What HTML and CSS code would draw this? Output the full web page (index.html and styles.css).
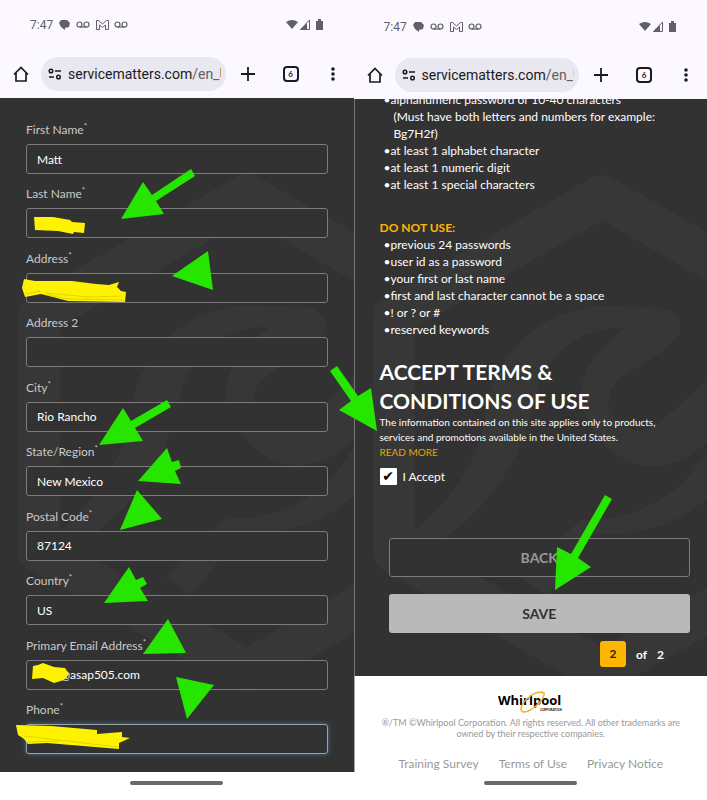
FILE: index.html
```html
<!DOCTYPE html>
<html lang="en">
<head>
  <meta charset="UTF-8">
  <meta name="viewport" content="width=device-width, initial-scale=1">
  <title>Service Matters Registration</title>
  <link rel="stylesheet" href="styles.css">
</head>
<body>

<!-- Shared icons -->
<svg class="symbols" aria-hidden="true">
  <symbol id="notifications" viewBox="0 0 70 12">
    <path d="M2 1h6l3 3-1 4-4 1v2L2 8 0 4z" fill="#625f66"/>
    <g fill="none" stroke="#625f66" stroke-width="1.2">
      <circle cx="20.500" cy="5.500" r="2.500"/><circle cx="27.500" cy="5.500" r="2.500"/><path d="M20.500 8h7"/>
      <circle cx="58.500" cy="5.500" r="2.500"/><circle cx="65.500" cy="5.500" r="2.500"/><path d="M58.500 8h7"/>
    </g>
    <path d="M37.500 10.500V1.500h2L43.500 5l4-3.500h2v9h-3V6L43.500 8.500 40.500 6v4.500z" fill="none" stroke="#625f66"/>
  </symbol>
  <symbol id="signal" viewBox="0 0 38 12">
    <path d="M0 3Q6-1 12 3L6 10z" fill="#625f66"/>
    <path d="M14.500 10.500h9V1z" fill="none" stroke="#625f66"/>
    <path d="M14 11h7V4z" fill="#625f66"/>
    <path d="M30 2h2V0h3v2h2v9h-7z" fill="#625f66"/>
  </symbol>
  <symbol id="home" viewBox="0 0 16 16">
    <path d="M3 7v8h10V7M1 8.500l7-7 7 7" fill="none" stroke="#1b1a20" stroke-width="1.700"/>
  </symbol>
  <symbol id="tune" viewBox="0 0 14 12">
    <g fill="none" stroke="#1b1a20" stroke-width="1.500">
      <circle cx="3" cy="3" r="1.800"/><path d="M7 3h6M1 9h5"/><circle cx="10.500" cy="9" r="1.800"/>
    </g>
  </symbol>
  <symbol id="plus" viewBox="0 0 14 14">
    <path d="M7 0v14M0 7h14" stroke="#1b1a20" stroke-width="1.800"/>
  </symbol>
  <symbol id="dots" viewBox="0 0 4 14">
    <g fill="#1b1a20"><circle cx="2" cy="2" r="1.800"/><circle cx="2" cy="7" r="1.800"/><circle cx="2" cy="12" r="1.800"/></g>
  </symbol>
  <symbol id="emblem" viewBox="0 0 354 540">
    <path d="M247 40L39 160V396L247 516L455 396V160z" fill="none" stroke="#373737" stroke-width="42" stroke-linejoin="round"/>
    <g fill="#373737">
      <path d="M133 245C146 190 190 152 250 150L312 153Q328 160 325 175C318 195 280 210 262 225Q245 245 262 265Q285 285 310 262L400 180V250L335 300Q290 325 250 290C215 250 215 215 270 172C225 170 185 200 178 250Q155 350 60 400V375Q125 320 133 245z"/>
      <path d="M165 422L225 364C280 365 330 340 354 290V340Q315 380 240 378L192 440z"/>
    </g>
  </symbol>
</svg>

<div class="page">
  <section class="phone">
    <div class="status-bar">
      <span>7:47</span>
      <svg class="notifications"><use href="#notifications"/></svg>
      <svg class="signal"><use href="#signal"/></svg>
    </div>
    <nav class="toolbar">
      <button class="icon-button" aria-label="Home"><svg class="icon-home"><use href="#home"/></svg></button>
      <div class="address-bar">
        <svg class="icon-tune"><use href="#tune"/></svg>
        <span class="url">servicematters.com<span class="path">/en_US</span></span>
      </div>
      <button class="icon-button" aria-label="New tab"><svg class="icon-plus"><use href="#plus"/></svg></button>
      <button class="tab-count">6</button>
      <button class="icon-button" aria-label="Menu"><svg class="icon-dots"><use href="#dots"/></svg></button>
    </nav>
    <main class="screen">
      <svg class="emblem"><use href="#emblem"/></svg>
      <form class="profile">
        <div class="field">
          <label for="firstName">First Name<sup>*</sup></label>
          <input type="text" id="firstName" value="Matt">
        </div>
        <div class="field">
          <label for="lastName">Last Name<sup>*</sup></label>
          <input type="text" id="lastName">
        </div>
        <div class="field">
          <label for="address">Address<sup>*</sup></label>
          <input type="text" id="address">
        </div>
        <div class="field">
          <label for="address2">Address 2</label>
          <input type="text" id="address2">
        </div>
        <div class="field">
          <label for="city">City<sup>*</sup></label>
          <input type="text" id="city" value="Rio Rancho">
        </div>
        <div class="field">
          <label for="state">State/Region<sup>*</sup></label>
          <input type="text" id="state" value="New Mexico">
        </div>
        <div class="field">
          <label for="postal">Postal Code<sup>*</sup></label>
          <input type="text" id="postal" value="87124">
        </div>
        <div class="field">
          <label for="country">Country<sup>*</sup></label>
          <input type="text" id="country" value="US">
        </div>
        <div class="field">
          <label for="email">Primary Email Address<sup>*</sup></label>
          <input class="email" type="text" id="email" value="@asap505.com">
        </div>
        <div class="field">
          <label for="phone">Phone<sup>*</sup></label>
          <input class="active" type="text" id="phone">
        </div>
      </form>
    </main>
    <div class="gesture-bar"></div>
  </section>

  <section class="phone phone-right">
    <div class="status-bar">
      <span>7:47</span>
      <svg class="notifications"><use href="#notifications"/></svg>
      <svg class="signal"><use href="#signal"/></svg>
    </div>
    <nav class="toolbar">
      <button class="icon-button" aria-label="Home"><svg class="icon-home"><use href="#home"/></svg></button>
      <div class="address-bar">
        <svg class="icon-tune"><use href="#tune"/></svg>
        <span class="url">servicematters.com<span class="path">/en_US</span></span>
      </div>
      <button class="icon-button" aria-label="New tab"><svg class="icon-plus"><use href="#plus"/></svg></button>
      <button class="tab-count">6</button>
      <button class="icon-button" aria-label="Menu"><svg class="icon-dots"><use href="#dots"/></svg></button>
    </nav>
    <main class="screen">
      <svg class="emblem"><use href="#emblem"/></svg>
      <form class="terms">
        <ul class="rules">
          <li>alphanumeric password of 10-40 characters<br>(Must have both letters and numbers for example: Bg7H2f)</li>
          <li>at least 1 alphabet character</li>
          <li>at least 1 numeric digit</li>
          <li>at least 1 special characters</li>
        </ul>
        <h3>DO NOT USE:</h3>
        <ul class="rules">
          <li>previous 24 passwords</li>
          <li>user id as a password</li>
          <li>your first or last name</li>
          <li>first and last character cannot be a space</li>
          <li>! or ? or #</li>
          <li>reserved keywords</li>
        </ul>
        <h2>ACCEPT TERMS &amp;<br>CONDITIONS OF USE</h2>
        <p class="notice">The information contained on this site applies only to products,<br>services and promotions available in the United States.</p>
        <a class="read-more" href="#">READ MORE</a>
        <div class="accept">
          <input type="checkbox" id="accept" checked>
          <label for="accept">I Accept</label>
        </div>
        <div class="actions">
          <button type="button" class="back">BACK</button>
          <button type="button" class="save">SAVE</button>
        </div>
        <div class="pager"><span class="current">2</span><span>of</span><span>2</span></div>
      </form>
    </main>
    <footer class="footer">
      <svg class="logo" viewBox="0 0 66 24" role="img" aria-label="Whirlpool Corporation">
        <text class="logo-name" x="0" y="14">Whirlpool</text>
        <text class="logo-sub" x="42" y="20">CORPORATION</text>
        <path d="M45 2C38-1 24 9 23 18C23 26 41 17 46 4Q47 1 43 1" fill="none" stroke="#f3b321" stroke-width="1.500"/>
      </svg>
      <p>®/TM ©Whirlpool Corporation. All rights reserved. All other trademarks are<br>owned by their respective companies.</p>
      <nav class="footer-links">
        <a href="#">Training Survey</a>
        <a href="#">Terms of Use</a>
        <a href="#">Privacy Notice</a>
      </nav>
    </footer>
    <div class="gesture-bar"></div>
  </section>

  <!-- Arrows and redactions drawn over both screens -->
  <svg class="markup" viewBox="0 0 707 800" aria-hidden="true">
    <g fill="#26e600">
      <path d="M121 219L143 182L152 195L191 169L195 176L156 201L164 214z"/>
      <path d="M172 276L208 251L213 290z"/>
      <path d="M99 445L123 408L131 421L167 400L171 407L135 428L143 441z"/>
      <path d="M138 481L167 448L172 462L179 460L181 468L175 471L181 484z"/>
      <path d="M120 530L137 490L162 519z"/>
      <path d="M104 603L129 567L136 580L143 577L147 584L140 588L148 601z"/>
      <path d="M143 654L168 619L186 653z"/>
      <path d="M176 677L214 685L187 719z"/>
      <path d="M377 431L339 410L351 401L330 371L337 366L358 396L371 388z"/>
      <path d="M555 590L557 547L571 554L605 495L612 499L578 558L591 567z"/>
    </g>
    <g fill="#fff200">
      <path d="M34 217L53 217L70 220L72 222L85 223L84 233L74 232L73 234L58 231L35 230z"/>
      <path d="M24 279L35 281L72 281L96 284L109 285L119 282L117 287L121 291L126 292L125 302L68 301L41 294L25 297L22 288z"/>
      <path d="M33 666L38 665L43 663L54 667L65 668L69 674L64 680L54 683L43 678L32 679z"/>
      <path d="M16 725L51 726L97 730L97 734L122 732L122 737L130 738L119 743L119 749L47 743L28 744L24 739L18 735z"/>
    </g>
    <g fill="none" stroke="#ded600" stroke-width="1">
      <path d="M48 295L68 299L124 300M45 293L90 297L122 296M25 294L40 291"/>
      <path d="M24 736L118 747M28 742L60 741"/>
    </g>
  </svg>
</div>

</body>
</html>
```
FILE: styles.css
```css
* {
  box-sizing: border-box;
}

body {
  margin: 0;
  background: #fff;
  color: #fff;
  font-family: Lato, "Liberation Sans", sans-serif;
  font-size: 12px;
}

button, input {
  font-family: inherit;
}

button {
  padding: 0;
  border: 0;
  background: none;
}

a {
  text-decoration: none;
}

.symbols {
  display: none;
}

.page {
  position: relative;
  display: grid;
  grid-template-columns: 1fr 1fr;
  min-height: 100vh;
}

.phone {
  display: flex;
  flex-direction: column;
  min-width: 0;
}

/* Browser chrome */
.status-bar {
  display: flex;
  align-items: center;
  height: 50px;
  padding: 0 30px;
  background: #fbf8ff;
  color: #625f66;
  font-family: Roboto, sans-serif;
  font-size: 12px;
}

.phone-right .status-bar {
  height: 51px;
  padding-top: 3px;
}

.notifications {
  width: 70px;
  height: 12px;
  margin-left: 6px;
}

.signal {
  width: 38px;
  height: 12px;
  margin-left: auto;
}

.toolbar {
  display: flex;
  align-items: center;
  height: 48px;
  padding: 0 12px;
  background: #fbf8ff;
}

.icon-button {
  display: flex;
  justify-content: center;
  width: 18px;
}

.icon-home {
  width: 16px;
  height: 16px;
}

.icon-plus {
  width: 14px;
  height: 14px;
}

.icon-dots {
  width: 4px;
  height: 14px;
}

.address-bar {
  display: flex;
  flex: 1;
  align-items: center;
  gap: 6px;
  min-width: 0;
  height: 34px;
  margin: 0 13px 0 11px;
  padding: 0 5px 0 7px;
  border-radius: 17px;
  background: #e9e7ef;
}

.icon-tune {
  flex: none;
  width: 14px;
  height: 12px;
}

.url {
  overflow: hidden;
  color: #1b1a20;
  font-family: Roboto, sans-serif;
  font-size: 14px;
  white-space: nowrap;
}

.path {
  color: #625f66;
}

.tab-count {
  width: 16px;
  height: 16px;
  margin: 0 25px 0 26px;
  border: 2px solid #1b1a20;
  border-radius: 4px;
  color: #1b1a20;
  font-size: 8px;
  font-weight: bold;
  line-height: 12px;
}

.screen {
  position: relative;
  display: flex;
  flex: 1;
  flex-direction: column;
  overflow: hidden;
  background: #323232;
}

/* Watermark behind the form */
.emblem {
  position: absolute;
  top: 57px;
  left: 0;
  width: 354px;
  height: 540px;
}

/* Profile form */
.profile {
  position: relative;
  display: flex;
  flex: 1;
  flex-direction: column;
  justify-content: space-between;
  padding: 24px 26px 18px;
}

.field label {
  display: block;
  height: 22px;
  color: #c9c9c9;
  line-height: 16px;
}

.field sup {
  font-size: 8px;
  line-height: 0;
}

.field input {
  display: block;
  width: 100%;
  height: 30px;
  padding: 0 10px;
  border: 1px solid #7c7c7c;
  border-radius: 3px;
  background: #323232;
  color: #fff;
  font-size: 12px;
}

.field .email {
  padding-left: 33px;
}

.field .active {
  border-color: #98a3aa;
  box-shadow: 0 0 5px #4c6f8c;
}

.gesture-bar {
  display: flex;
  flex: none;
  justify-content: center;
  height: 28px;
  padding-top: 9px;
  background: #fff;
}

.gesture-bar::before {
  width: 93px;
  height: 4px;
  border-radius: 2px;
  background: #69696a;
  content: "";
}

/* Terms form */
.phone-right .screen {
  border-left: 1px solid #777;
}

.terms {
  position: relative;
  margin-top: -8px;
  padding: 0 17px 9px 25px;
}

.rules {
  margin: 0;
  padding: 0;
  list-style: none;
  line-height: 17px;
}

.rules li {
  position: relative;
  padding-left: 14px;
}

.rules li::before {
  margin-left: -10px;
  content: "•";
}

h3 {
  margin: 26px 0 0;
  color: #ffb600;
  font-size: 12px;
  line-height: 17px;
}

h2 {
  margin: 19px 0 0;
  font-size: 21px;
  line-height: 29px;
}

.notice {
  margin: 0;
  font-size: 10px;
  line-height: 15px;
  white-space: nowrap;
}

.read-more {
  display: block;
  color: #e5a50a;
  font-size: 10px;
  line-height: 15px;
}

.accept {
  display: flex;
  align-items: center;
  gap: 6px;
  margin-top: 8px;
}

.accept input {
  width: 17px;
  height: 17px;
  margin: 0;
  border-radius: 1px;
  background: #fff;
  appearance: none;
}

.accept input:checked::before {
  display: block;
  color: #000;
  font-family: "DejaVu Sans", sans-serif;
  font-size: 14px;
  line-height: 17px;
  text-align: center;
  content: "✔";
}

.actions {
  display: grid;
  gap: 17px;
  margin: 53px 0 8px 9px;
}

.actions button {
  height: 39px;
  border-radius: 3px;
  font-size: 14px;
  font-weight: bold;
}

.actions .back {
  border: 1px solid #7c7c7c;
  background: #323232;
  color: #999;
}

.actions .save {
  background: #b9b9b9;
  color: #323232;
}

.pager {
  display: flex;
  align-items: center;
  justify-content: flex-end;
  gap: 10px;
  padding-right: 26px;
  font-weight: bold;
}

.current {
  width: 26px;
  border-radius: 3px;
  background: #ffb600;
  color: #222;
  line-height: 26px;
  text-align: center;
}

.footer {
  padding: 15px 12px 0;
  border-left: 1px solid #aaa;
  background: #fff;
  color: #999;
  font-size: 9px;
  line-height: 11px;
  text-align: center;
}

.footer p {
  margin: 2px 0 17px;
  white-space: nowrap;
}

.logo {
  display: block;
  width: 66px;
  height: 24px;
  margin: 0 auto;
}

.logo-name {
  font-family: "Open Sans", sans-serif;
  font-size: 13px;
  font-weight: bold;
}

.logo-sub {
  font-size: 3px;
  font-weight: bold;
}

.footer-links {
  display: flex;
  justify-content: center;
  gap: 20px;
}

.footer-links a {
  color: #999;
  font-size: 12px;
  line-height: 16px;
}

.markup {
  position: absolute;
  top: 0;
  left: 0;
  width: 707px;
  height: 800px;
  pointer-events: none;
}
```
